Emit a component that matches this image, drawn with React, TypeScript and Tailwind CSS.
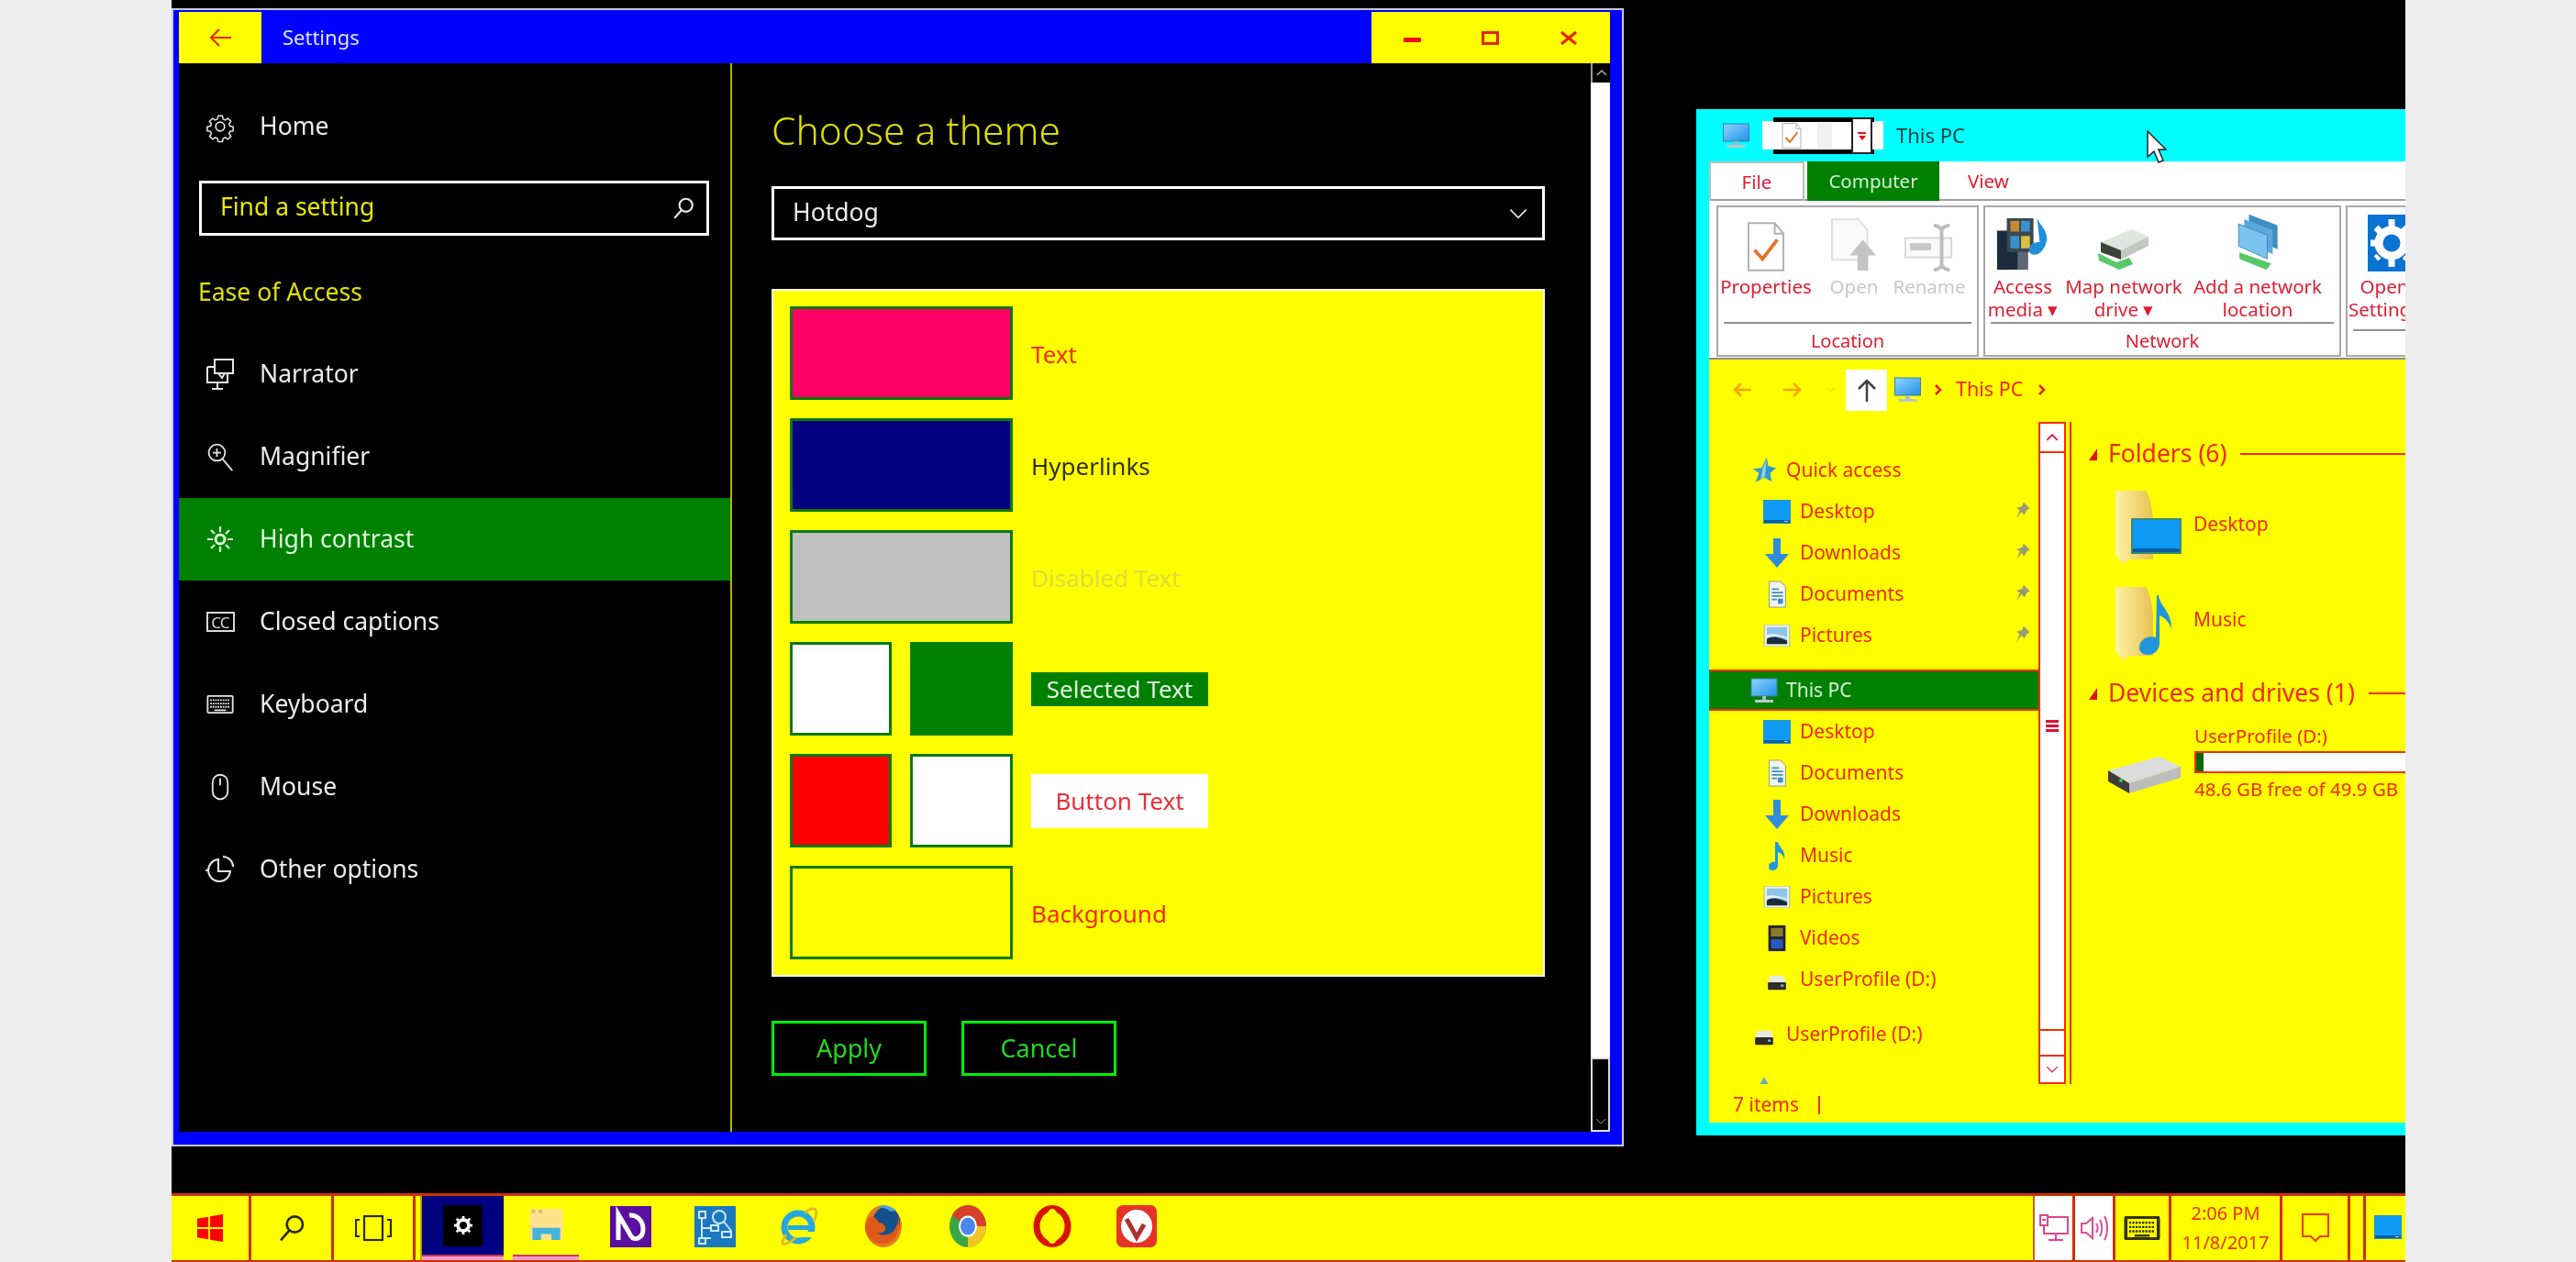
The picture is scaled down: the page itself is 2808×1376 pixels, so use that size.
import React from "react";

type P = { className?: string };

const GearOutline = ({ className }: P) => (
  <svg className={className} viewBox="0 0 24 24" fill="none" stroke="#e6e6e6" strokeWidth="1.3" strokeLinejoin="round">
    <path d="M10 2h4l.6 3 2 .9 2.6-1.6 2.7 2.8-1.7 2.5.8 2 3 .5v3.800l-3 .6-.8 2 1.700 2.500-2.700 2.700-2.500-1.600-2 .8-.7 3h-4l-.6-3-2-.8-2.500 1.600-2.800-2.700 1.700-2.500-.9-2-3-.6v-3.800l3-.5.900-2-1.700-2.500 2.800-2.800 2.500 1.600 2-.9z" transform="translate(1.500 1.500) scale(.88)" />
    <circle cx="12" cy="12" r="3.600" />
  </svg>
);
const SearchIco = ({ className, c = "#e6e6e6" }: P & { c?: string }) => (
  <svg className={className} viewBox="0 0 24 24" fill="none" stroke={c} strokeWidth="2">
    <circle cx="14.500" cy="9" r="6.500" />
    <path d="M10 14 3 22" />
  </svg>
);
const NarratorIco = ({ className }: P) => (
  <svg className={className} viewBox="0 0 32 36" fill="none" stroke="#e6e6e6" strokeWidth="2">
    <path d="M10 2h20v15H10zM2 10h8M2 10v17h22v-10M13 27v6M7 34h12M14 17l4 5 3-5" />
  </svg>
);
const MagIco = ({ className }: P) => (
  <svg className={className} viewBox="0 0 32 36" fill="none" stroke="#e6e6e6" strokeWidth="2">
    <circle cx="12" cy="13" r="10" />
    <path d="M12 8v10M7 13h10M19 21l12 14" />
  </svg>
);
const SunIco = ({ className }: P) => (
  <svg className={className} viewBox="0 0 30 30" fill="none" stroke="#d8ffd8" strokeWidth="2.200">
    <circle cx="15" cy="15" r="5" strokeWidth="3" />
    <path d="M15 1v6M15 23v6M1 15h6M23 15h6M5 5l4 4M21 21l4 4M25 5l-4 4M9 21l-4 4" />
  </svg>
);
const KeyboardIco = ({ className, c = "#e6e6e6", w = "2" }: P & { c?: string; w?: string }) => (
  <svg className={className} viewBox="0 0 32 22" fill="none" stroke={c} strokeWidth={w}>
    <rect x="1" y="1" width="30" height="20" rx="1" />
    <path d="M4 6h24M4 10h24M4 14h24" strokeDasharray="2 1" strokeWidth="2" />
    <path d="M9 18h14" strokeWidth="2" />
  </svg>
);
const MouseIco = ({ className }: P) => (
  <svg className={className} viewBox="0 0 24 32" fill="none" stroke="#e6e6e6" strokeWidth="2">
    <rect x="3" y="1.500" width="18" height="29" rx="9" />
    <path d="M12 6v8" />
  </svg>
);
const OtherIco = ({ className }: P) => (
  <svg className={className} viewBox="0 0 32 32" fill="none" stroke="#e6e6e6" strokeWidth="2">
    <path d="M14 5a12 12 0 1 0 13 13H14zM19 2a11 11 0 0 1 11 11M3 17H0" />
  </svg>
);
const ChevronDown = ({ className, c = "#e6e6e6" }: P & { c?: string }) => (
  <svg className={className} viewBox="0 0 24 14" fill="none" stroke={c} strokeWidth="2">
    <path d="M2 2l10 10L22 2" />
  </svg>
);
const ChevronUp = ({ className, c = "#e6e6e6" }: P & { c?: string }) => (
  <svg className={className} viewBox="0 0 24 14" fill="none" stroke={c} strokeWidth="3">
    <path d="M2 12L12 2l10 10" />
  </svg>
);
const CrumbChevron = () => (
  <svg className="w-[8px] h-[12px] shrink-0" viewBox="0 0 8 12" fill="none" stroke="#e82000" strokeWidth="2.500">
    <path d="M1 1l5 5-5 5" />
  </svg>
);

const PcIco = ({ className }: P) => (
  <svg className={className} viewBox="0 0 30 28">
    <defs>
      <linearGradient id="pcg" x1="0" y1="0" x2="1" y2="1">
        <stop offset="0" stopColor="#8fd6ff" />
        <stop offset="1" stopColor="#1e90e8" />
      </linearGradient>
    </defs>
    <rect x="1" y="1" width="28" height="19" fill="url(#pcg)" stroke="#3b7f9f" />
    <rect x="13" y="20" width="4" height="4" fill="#a8b8b8" />
    <rect x="5" y="24" width="20" height="3" fill="#b8c8c8" />
  </svg>
);
const DesktopIco = ({ className }: P) => (
  <svg className={className} viewBox="0 0 30 26">
    <rect x="0" y="0" width="30" height="26" fill="#0f9bf5" stroke="#3c8c8c" />
    <rect x="1" y="22" width="28" height="3" fill="#0a5ea0" />
    <rect x="23" y="23" width="4" height="1" fill="#cce" />
  </svg>
);
const DownIco = ({ className }: P) => (
  <svg className={className} viewBox="0 0 30 32">
    <path d="M11 0h8v17h9L15 32 2 17h9z" fill="#2f8ddc" />
  </svg>
);
const DocIco = ({ className }: P) => (
  <svg className={className} viewBox="0 0 30 32">
    <path d="M6 1h13l6 6v24H6z" fill="#f2f4ea" stroke="#8a9a80" />
    <path d="M9 10h8M9 14h13M9 18h13M9 22h6" stroke="#3d8ec8" strokeWidth="2" />
    <rect x="16" y="21" width="6" height="6" fill="#3d8ec8" />
  </svg>
);
const PicIco = ({ className }: P) => (
  <svg className={className} viewBox="0 0 30 26">
    <rect x="0" y="0" width="30" height="26" fill="#eef2dc" stroke="#a8b090" />
    <rect x="3" y="3" width="24" height="20" fill="#8cc4ec" />
    <path d="M3 17c6-4 12-3 24 2v4H3z" fill="#1c2c3c" />
    <path d="M3 12c8-2 14 0 24 3v2C18 13 10 13 3 16z" fill="#e8f0f4" />
  </svg>
);
const NoteIco = ({ className }: P) => (
  <svg className={className} viewBox="0 0 30 32">
    <path d="M13 1h3c1 6 9 9 7 19-1-5-4-7-7-8v14c0 4-3 6-6 6s-4-2-4-4c0-4 4-6 7-5z" fill="#1f96dc" />
  </svg>
);
const VideoIco = ({ className }: P) => (
  <svg className={className} viewBox="0 0 30 32">
    <rect x="5" y="1" width="20" height="30" fill="#23231a" />
    <rect x="8" y="4" width="14" height="10" fill="#8a7a30" />
    <rect x="8" y="17" width="14" height="11" fill="#2858c0" />
  </svg>
);
const DriveSmall = ({ className }: P) => (
  <svg className={className} viewBox="0 0 30 22">
    <path d="M6 2h18l3 9H3z" fill="#e8e8e0" />
    <rect x="3" y="11" width="24" height="10" rx="1" fill="#2c2c28" />
    <rect x="20" y="14" width="4" height="3" fill="#8ac" />
  </svg>
);
const StarIco = ({ className }: P) => (
  <svg className={className} viewBox="0 0 30 32">
    <path d="M18 1l2 10 9 2-7 6 2 10-9-5-10 6 4-11-7-5 10-1z" fill="#2f9bd0" />
    <path d="M18 3l-2 20-5 3 3-14z" fill="#9ad0d8" />
  </svg>
);
const PinIco = ({ className }: P) => (
  <svg className={className} viewBox="0 0 20 26">
    <path d="M11 1l8 8-4 2-3 6-4-4-6 9 4-11-4-3 7-2z" fill="#9a9a70" />
  </svg>
);
const NetIco = ({ className }: P) => (
  <svg className={className} viewBox="0 0 30 26">
    <path d="M15 1l10 16H5z" fill="#6aa8c8" />
    <rect x="4" y="18" width="22" height="6" fill="#4a88a8" />
  </svg>
);

const FolderDesktop = ({ className }: P) => (
  <svg className={className} viewBox="0 0 72 80">
    <defs>
      <linearGradient id="fld" x1="0" y1="0" x2="1" y2="0">
        <stop offset="0" stopColor="#fff2a8" />
        <stop offset="1" stopColor="#e6c050" />
      </linearGradient>
    </defs>
    <path d="M0 0h33c5 8 7 20 8 30v45H14L9 80 0 70z" fill="url(#fld)" />
    <rect x="18" y="31" width="53" height="37" fill="#0f9bf5" stroke="#3a8a70" strokeWidth="2" />
    <rect x="19" y="63" width="51" height="4" fill="#0a5ea0" />
  </svg>
);
const FolderMusic = ({ className }: P) => (
  <svg className={className} viewBox="0 0 72 80">
    <defs>
      <linearGradient id="fld2" x1="0" y1="0" x2="1" y2="0">
        <stop offset="0" stopColor="#fff2a8" />
        <stop offset="1" stopColor="#e6c050" />
      </linearGradient>
    </defs>
    <path d="M0 0h33c5 8 7 20 8 30v45H14L9 80 0 70z" fill="url(#fld2)" />
    <path d="M45 9h2c1 12 15 18 14 38-1-8-8-14-13-16v30c0 9-7 13-13 13-6 0-9-4-9-8 0-8 9-14 18-11z" fill="#1f96dc" />
  </svg>
);
const DriveLarge = ({ className }: P) => (
  <svg className={className} viewBox="0 0 82 42">
    <path d="M2 16L58 1l23 11-56 18z" fill="#dcdcdc" />
    <path d="M2 16l23 14v11L2 28z" fill="#3c3c3c" />
    <path d="M25 30l56-18v12L25 41z" fill="#bcbcbc" />
    <circle cx="16" cy="27" r="2" fill="#30d060" />
  </svg>
);

const PropsIco = ({ className }: P) => (
  <svg className={className} viewBox="0 0 42 56" fill="none">
    <path d="M1 1h30l10 12v42H1z" fill="#fff" stroke="#b0b0b0" strokeWidth="2" />
    <path d="M31 1v12h10" stroke="#b0b0b0" strokeWidth="2" />
    <path d="M8 32l9 10 17-22" stroke="#e8702a" strokeWidth="4" />
  </svg>
);
const OpenIco = ({ className }: P) => (
  <svg className={className} viewBox="0 0 52 60" fill="none">
    <path d="M1 1h30l10 12v34H1z" fill="#fafafa" stroke="#dedede" strokeWidth="2" />
    <path d="M36 24l15 18H42v17H30V42H21z" fill="#c4c4c4" />
  </svg>
);
const RenameIco = ({ className }: P) => (
  <svg className={className} viewBox="0 0 56 52" fill="none">
    <rect x="1" y="15" width="52" height="22" fill="#fafafa" stroke="#d8d8d8" strokeWidth="2" />
    <rect x="6" y="21" width="24" height="8" fill="#c8c8c8" />
    <path d="M33 1c3 0 7 2 9 5 2-3 6-5 9-5M42 6v40M33 51c3 0 7-2 9-5 2 3 6 5 9 5" stroke="#bcbcbc" strokeWidth="4" />
  </svg>
);
const MediaIco = ({ className }: P) => (
  <svg className={className} viewBox="0 0 60 62">
    <rect x="1" y="16" width="32" height="44" fill="#1c2c3c" />
    <rect x="24" y="16" width="12" height="44" fill="#5a6874" />
    <rect x="12" y="2" width="30" height="38" fill="#3c4850" />
    <rect x="16" y="5" width="10" height="12" fill="#c88a30" />
    <rect x="28" y="5" width="10" height="12" fill="#3a90d0" />
    <rect x="16" y="22" width="10" height="14" fill="#3a90d0" />
    <rect x="28" y="22" width="10" height="14" fill="#d8c040" />
    <path d="M46 1c2 8 12 14 11 25-1 7-5 15-12 17-6 1-9-3-8-7 1-5 7-8 12-7z" fill="#1f8fd8" />
  </svg>
);
const MapIco = ({ className }: P) => (
  <svg className={className} viewBox="0 0 58 48">
    <path d="M4 16L38 2l18 8-30 15z" fill="#e0e4e0" />
    <path d="M4 16l22 9v10L4 27z" fill="#3c4438" />
    <path d="M26 25l30-15v10L26 35z" fill="#c0c8c0" />
    <path d="M1 28l20 10 14-5 4 7-15 6L2 36z" fill="#58c868" />
  </svg>
);
const AddNetIco = ({ className }: P) => (
  <svg className={className} viewBox="0 0 54 74">
    <path d="M16 2l36 14v30L16 30z" fill="#3c8fc0" />
    <path d="M10 8l36 14v30L10 36z" fill="#5aa8dc" />
    <path d="M3 14l36 14v30L3 42z" fill="#7cc4f0" stroke="#3a7fa8" />
    <path d="M4 50l40 14-6 8L4 58z" fill="#58c868" />
  </svg>
);
const SettingsTile = ({ className }: P) => (
  <svg className={className} viewBox="0 0 50 62">
    <rect width="50" height="62" fill="#0a72d0" />
    <circle cx="26" cy="31" r="14" fill="none" stroke="#fff" strokeWidth="9" />
    <path d="M26 5v52M3 31h46M9 14l34 34M43 14L9 48" stroke="#fff" strokeWidth="7" strokeDasharray="8 36" />
  </svg>
);

const WinLogo = ({ className }: P) => (
  <svg className={className} viewBox="0 0 32 34">
    <path d="M1 6l13-2v12H1zM16 3.500L31 1v15H16zM1 18h13v12L1 28zM16 18h15v15l-15-2.500z" fill="#f00" />
  </svg>
);
const TaskViewIco = ({ className }: P) => (
  <svg className={className} viewBox="0 0 40 30" fill="none" stroke="#2a2a00" strokeWidth="2.200">
    <rect x="10" y="2" width="20" height="26" />
    <path d="M5 6H1v18h4M35 6h4v18h-4" />
  </svg>
);
const WhiteGear = ({ className }: P) => (
  <svg className={className} viewBox="0 0 24 24" fill="none">
    <circle cx="12" cy="12" r="6.500" stroke="#fff" strokeWidth="4" />
    <path d="M12 1v5M12 18v5M1 12h5M18 12h5M4 4l4 4M16 16l4 4M20 4l-4 4M8 16l-4 4" stroke="#fff" strokeWidth="3" />
  </svg>
);
const ExplorerIco = ({ className }: P) => (
  <svg className={className} viewBox="0 0 38 36">
    <rect width="38" height="36" fill="#ffe28c" />
    <rect x="2" y="1" width="4" height="4" fill="#d8c060" />
    <rect x="10" y="1" width="4" height="4" fill="#d8c060" />
    <path d="M3 22h32v14H25v-7H13v7H3z" fill="#45b4dc" />
  </svg>
);
const NApp = ({ className }: P) => (
  <svg className={className} viewBox="0 0 45 45">
    <rect width="45" height="45" fill="#5a0fa0" />
    <path d="M9 37V9l14 24c3 5 13 3 13-8 0-9-7-16-15-15" fill="none" stroke="#fff" strokeWidth="5" />
  </svg>
);
const GraphApp = ({ className }: P) => (
  <svg className={className} viewBox="0 0 45 45">
    <rect width="45" height="45" fill="#1a78c0" />
    <g fill="none" stroke="#cfe8f4" strokeWidth="2">
      <circle cx="27" cy="12" r="7" />
      <path d="M32 17l8 10" />
      <rect x="5" y="6" width="7" height="7" />
      <path d="M8 13v22M8 24h10M8 35h10" />
      <rect x="18" y="21" width="8" height="6" />
      <rect x="30" y="28" width="10" height="6" />
      <rect x="5" y="35" width="7" height="6" />
    </g>
  </svg>
);
const IeIco = ({ className }: P) => (
  <svg className={className} viewBox="0 0 44 46">
    <circle cx="21" cy="24" r="15" fill="none" stroke="#25a8e0" strokeWidth="7" />
    <rect x="10" y="22" width="24" height="5" fill="#25a8e0" />
    <path d="M8 32C0 44 4 46 18 36M28 8c12-8 16-4 10 10" fill="none" stroke="#e8b820" strokeWidth="3" />
    <rect x="24" y="29" width="20" height="6" fill="#ffff00" />
  </svg>
);
const FirefoxIco = ({ className }: P) => (
  <svg className={className} viewBox="0 0 42 48">
    <ellipse cx="21" cy="24" rx="20" ry="23" fill="#ea7a20" />
    <ellipse cx="24" cy="20" rx="15" ry="17" fill="#16508c" />
    <path d="M6 14c4-2 8 2 10 6 4 0 8 4 7 8-2 3-6 4-9 3 4 4 14 4 19-3 3-5 5-10 4-14 3 8 2 18-6 25-9 8-24 5-29-8-2-6-1-12 4-17z" fill="#e05a18" />
    <path d="M14 3c5-3 15-2 21 4l-6 1C24 4 18 3 14 3z" fill="#48a8d8" />
  </svg>
);
const ChromeIco = ({ className }: P) => (
  <svg className={className} viewBox="0 0 42 48">
    <ellipse cx="21" cy="24" rx="20" ry="23" fill="#3aa648" />
    <path d="M21 24l20 0A20 23 0 0 0 3.700 12.500z" fill="#d8402c" />
    <path d="M21 24l20 0A20 23 0 0 1 21 47z" fill="#f2c428" />
    <ellipse cx="21" cy="24" rx="10" ry="11.500" fill="#fff" />
    <ellipse cx="21" cy="24" rx="8" ry="9.500" fill="#4a88ee" />
  </svg>
);
const OperaIco = ({ className }: P) => (
  <svg className={className} viewBox="0 0 42 48">
    <ellipse cx="21" cy="24" rx="17" ry="19.500" fill="none" stroke="#d81400" strokeWidth="7" />
    <ellipse cx="21" cy="24" rx="8" ry="19" fill="#ffff00" />
  </svg>
);
const VivaldiIco = ({ className }: P) => (
  <svg className={className} viewBox="0 0 44 46">
    <rect width="44" height="46" rx="7" fill="#e63228" />
    <ellipse cx="22" cy="23" rx="17" ry="18" fill="#fff" />
    <path d="M11 15l11 20 8-14" fill="none" stroke="#b03030" strokeWidth="5" />
  </svg>
);
const NetTray = ({ className }: P) => (
  <svg className={className} viewBox="0 0 32 30" fill="none" stroke="#e0458c" strokeWidth="2">
    <path d="M9 3h22v18H5v-8M18 21v6M10 28h16" />
    <rect x="1" y="1" width="8" height="11" />
    <path d="M3 6h4" />
  </svg>
);
const VolTray = ({ className }: P) => (
  <svg className={className} viewBox="0 0 32 32" fill="none" stroke="#d8508c" strokeWidth="2">
    <path d="M2 11h5l7-6v22l-7-6H2zM18 11c2 3 2 7 0 10M22 7c3 5 3 13 0 18M27 3c4 7 4 19 0 26" />
  </svg>
);
const ActionTray = ({ className }: P) => (
  <svg className={className} viewBox="0 0 30 32" fill="none" stroke="#ee3a00" strokeWidth="2">
    <path d="M1 1h28v24H20l-5 5-5-5H1z" />
  </svg>
);
const Cursor = ({ className }: P) => (
  <svg className={className} viewBox="0 0 22 36">
    <path d="M1 1v28l7-6 5 12 5-2-5-12h8z" fill="#fff" stroke="#222" strokeWidth="1.500" />
  </svg>
);

const sideItems = [
  { t: "Narrator", i: <NarratorIco className="w-[32px] h-[36px]" /> },
  { t: "Magnifier", i: <MagIco className="w-[32px] h-[32px]" /> },
  { t: "High contrast", i: <SunIco className="w-[30px] h-[30px]" />, active: true },
  {
    t: "Closed captions",
    i: (
      <div className="w-[31px] h-[22px] border-2 border-[#d8d8d8] flex items-center justify-center text-[17px] leading-none text-[#d8d8d8] tracking-tighter">
        CC
      </div>
    ),
  },
  { t: "Keyboard", i: <KeyboardIco className="w-[30px] h-[20px]" /> },
  { t: "Mouse", i: <MouseIco className="w-[22px] h-[30px]" /> },
  { t: "Other options", i: <OtherIco className="w-[32px] h-[32px]" /> },
];

const SwatchBox = ({ c, w = "w-[243px]" }: { c: string; w?: string }) => (
  <div className={`${w} h-[102px] border-[3px] border-[#0a7a0a]`} style={{ backgroundColor: c }} />
);

const SettingsWindow = () => (
  <div className="absolute left-0 top-[9px] w-[1583px] h-[1241px] border-2 border-[#c9c9ff] bg-[#0000ff] pl-[6px] pr-[13px] pt-[2px] pb-[14px] flex flex-col">
    <div className="h-[56px] flex shrink-0">
      <div className="w-[90px] bg-[#ffff00] flex items-center justify-center">
        <svg className="w-[24px] h-[22px]" viewBox="0 0 24 22" fill="none" stroke="#ee2200" strokeWidth="2">
          <path d="M24 11H2M11 2l-9 9 9 9" />
        </svg>
      </div>
      <div className="ml-[23px] flex items-center text-[#e4e4ff] text-[22px] pb-[2px]">Settings</div>
      <div className="ml-auto w-[260px] bg-[#ffff00] flex relative">
        <div className="w-[86px] flex items-center justify-center pt-[4px] pl-[2px]">
          <div className="w-[19px] h-[5px] bg-[#f01000]" />
        </div>
        <div className="w-[86px] flex items-center justify-center">
          <div className="w-[19px] h-[15px] border-[3px] border-[#e02800]" />
        </div>
        <div className="w-[86px] flex items-center justify-center">
          <svg className="w-[18px] h-[15px]" viewBox="0 0 18 15" stroke="#e62000" strokeWidth="3">
            <path d="M1 1l16 13M17 1L1 14" />
          </svg>
        </div>
      </div>
    </div>
    <div className="flex-1 bg-black flex min-h-0">
      <div className="w-[603px] shrink-0 border-r-2 border-[#b4b400] flex flex-col">
        <div className="mt-[24px] h-[90px] flex items-center pl-[29px] text-[#ececec] text-[26.5px]">
          <GearOutline className="w-[32px] h-[36px] shrink-0" />
          <span className="ml-[27px]">Home</span>
        </div>
        <div className="mt-[14px] ml-[22px] w-[556px] h-[60px] border-[3px] border-white flex items-center pl-[20px] pr-[12px] text-[#e8e800] text-[26.5px]">
          <span className="pb-[2px]">Find a setting</span>
          <SearchIco className="ml-auto w-[26px] h-[26px]" />
        </div>
        <div className="mt-[43px] pl-[21px] h-[36px] leading-[36px] text-[#e0e000] text-[26.5px]">Ease of Access</div>
        <div className="mt-[27px] flex flex-col">
          {sideItems.map((s) => (
            <div
              key={s.t}
              className={`h-[90px] flex items-center pl-[29px] text-[26.5px] ${s.active ? "bg-[#008000] text-[#dcffdc]" : "text-[#ececec]"}`}
            >
              <div className="w-[32px] flex justify-center shrink-0">{s.i}</div>
              <span className="ml-[27px]">{s.t}</span>
            </div>
          ))}
        </div>
      </div>
      <div className="flex-1 pl-[43px] flex flex-col min-w-0">
        <div className="mt-[50px] h-[46px] leading-[46px] text-[#dede00] text-[42.5px] font-light">Choose a theme</div>
        <div className="mt-[38px] w-[843px] h-[59px] border-[3px] border-white flex items-center pl-[20px] pr-[14px] text-[#ececec] text-[26.5px]">
          <span className="pb-[2px]">Hotdog</span>
          <ChevronDown className="ml-auto w-[24px] h-[12px]" />
        </div>
        <div className="mt-[53px] w-[843px] h-[750px] bg-[#ffff00] border-2 border-[#f4f4f4] pl-[18px] pt-[17px] flex flex-col gap-[20px] text-[26px]">
          <div className="flex items-center gap-[20px]">
            <SwatchBox c="#ff0066" />
            <span className="text-[#f03000] pt-[2px]">Text</span>
          </div>
          <div className="flex items-center gap-[20px]">
            <SwatchBox c="#000080" />
            <span className="text-[#303000] pt-[2px]">Hyperlinks</span>
          </div>
          <div className="flex items-center gap-[20px]">
            <SwatchBox c="#c0c0c0" />
            <span className="text-[#dcdc3c] pt-[2px]">Disabled Text</span>
          </div>
          <div className="flex items-center gap-[20px]">
            <div className="flex gap-[20px]">
              <SwatchBox c="#ffffff" w="w-[111px]" />
              <div className="w-[112px] h-[102px] bg-[#008000]" />
            </div>
            <span className="w-[193px] h-[37px] bg-[#008000] text-[#e0f4e0] flex items-center justify-center">Selected Text</span>
          </div>
          <div className="flex items-center gap-[20px]">
            <div className="flex gap-[20px]">
              <SwatchBox c="#ff0000" w="w-[111px]" />
              <SwatchBox c="#ffffff" w="w-[112px]" />
            </div>
            <span className="w-[193px] h-[59px] bg-white text-[#e8303c] flex items-center justify-center">Button Text</span>
          </div>
          <div className="flex items-center gap-[20px]">
            <SwatchBox c="#ffff00" />
            <span className="text-[#f52a00] pt-[2px]">Background</span>
          </div>
        </div>
        <div className="mt-[48px] flex gap-[38px] text-[27px] text-[#22d822]">
          <div className="w-[169px] h-[60px] border-[3px] border-[#00ee00] flex items-center justify-center">Apply</div>
          <div className="w-[169px] h-[60px] border-[3px] border-[#00ee00] flex items-center justify-center">Cancel</div>
        </div>
      </div>
      <div className="w-[21px] shrink-0 bg-white flex flex-col justify-between">
        <div className="h-[21px] bg-black border-l-2 border-[#999] flex items-center justify-center">
          <ChevronUp className="w-[12px] h-[7px]" c="#a8a8a8" />
        </div>
        <div className="h-[81px] bg-black border-2 border-[#ddd] flex items-end justify-center pb-[6px]">
          <ChevronDown className="w-[12px] h-[7px]" c="#888" />
        </div>
      </div>
    </div>
  </div>
);

const navItems: { t: string; i: React.ReactNode; lvl: 0 | 1; pin?: boolean; sel?: boolean; mt?: string }[] = [
  { t: "Quick access", i: <StarIco className="w-[28px] h-[30px]" />, lvl: 0 },
  { t: "Desktop", i: <DesktopIco className="w-[30px] h-[26px]" />, lvl: 1, pin: true },
  { t: "Downloads", i: <DownIco className="w-[30px] h-[32px]" />, lvl: 1, pin: true },
  { t: "Documents", i: <DocIco className="w-[30px] h-[30px]" />, lvl: 1, pin: true },
  { t: "Pictures", i: <PicIco className="w-[30px] h-[24px]" />, lvl: 1, pin: true },
  { t: "This PC", i: <PcIco className="w-[30px] h-[28px]" />, lvl: 0, sel: true, mt: "mt-[15px]" },
  { t: "Desktop", i: <DesktopIco className="w-[30px] h-[26px]" />, lvl: 1 },
  { t: "Documents", i: <DocIco className="w-[30px] h-[30px]" />, lvl: 1 },
  { t: "Downloads", i: <DownIco className="w-[30px] h-[32px]" />, lvl: 1 },
  { t: "Music", i: <NoteIco className="w-[30px] h-[32px]" />, lvl: 1 },
  { t: "Pictures", i: <PicIco className="w-[30px] h-[24px]" />, lvl: 1 },
  { t: "Videos", i: <VideoIco className="w-[30px] h-[30px]" />, lvl: 1 },
  { t: "UserProfile (D:)", i: <DriveSmall className="w-[28px] h-[18px] mt-[6px]" />, lvl: 1 },
  { t: "UserProfile (D:)", i: <DriveSmall className="w-[28px] h-[18px] mt-[6px]" />, lvl: 0, mt: "mt-[15px]" },
  { t: "Network", i: <NetIco className="w-[26px] h-[24px] mb-[12px]" />, lvl: 0, mt: "mt-[18px]" },
];

const RibItem = ({ w, icon, lines, off }: { w: string; icon: React.ReactNode; lines: string[]; off?: boolean }) => (
  <div className={`${w} shrink-0 flex flex-col items-center`}>
    <div className="h-[64px] w-full flex items-end justify-center">{icon}</div>
    <div className={`mt-[4px] text-[20.5px] leading-[25px] text-center whitespace-nowrap ${off ? "text-[#c8c8c8]" : "text-[#e01c30]"}`}>
      {lines.map((l) => (
        <div key={l}>{l}</div>
      ))}
    </div>
  </div>
);

const RibGroup = ({ w, label, children }: { w: string; label?: string; children: React.ReactNode }) => (
  <div className={`${w} shrink-0 h-[165px] border-2 border-[#a8a8a8] flex flex-col`}>
    <div className="h-[133px] flex pt-[6px]">{children}</div>
    <div className="mx-[6px] h-[2px] bg-[#909090]" />
    <div className="flex-1 flex items-center justify-center text-[20px] text-[#e01c30] pt-[4px]">{label}</div>
  </div>
);

const TriDown = () => <div className="w-0 h-0 border-l-[4px] border-r-[4px] border-t-[5px] border-l-transparent border-r-transparent border-t-[#e01020]" />;

const SectionHead = ({ t }: { t: string }) => (
  <div className="h-[36px] flex items-center pl-[21px] text-[26.5px] text-[#f02a00] whitespace-nowrap">
    <svg className="w-[9px] h-[13px] shrink-0" viewBox="0 0 9 13">
      <path d="M9 0v13H0z" fill="#e01020" />
    </svg>
    <span className="ml-[12px]">{t}</span>
    <div className="ml-[15px] w-[400px] h-[2px] bg-[#f03000] shrink-0" />
  </div>
);

const ExplorerWindow = () => (
  <div className="absolute left-[1662px] top-[119px] w-[1000px] h-[1119px] bg-[#00ffff] pl-[14px] pb-[14px] flex flex-col">
    <div className="h-[57px] flex items-center shrink-0 text-[#123c3c] text-[22px]">
      <PcIco className="ml-[14px] w-[31px] h-[28px]" />
      <div className="ml-[13px] w-[132px] h-[31px] bg-white relative flex items-center">
        <div className="absolute left-[12px] right-[10px] -top-[4px] h-[5px] bg-black" />
        <div className="absolute left-[12px] right-[10px] -bottom-[5px] h-[5px] bg-black" />
        <PropsIco className="ml-[21px] w-[22px] h-[28px]" />
        <div className="ml-[17px] w-[16px] h-[28px] bg-[#f0f0f0]" />
        <div className="absolute right-[12px] -top-[4px] w-[23px] h-[40px] border-2 border-[#222] bg-white rounded-[2px] flex flex-col items-center justify-center gap-[2px]">
          <div className="w-[9px] h-[2px] bg-[#e01020]" />
          <TriDown />
        </div>
      </div>
      <span className="ml-[14px]">This PC</span>
    </div>
    <div className="h-[43px] bg-white border-b-2 border-[#a0a0a0] flex shrink-0 text-[20.5px] text-[#e01c30]">
      <div className="w-[104px] h-[43px] border-t-2 border-l-2 border-r-2 border-[#bcbcbc] flex items-center justify-center">File</div>
      <div className="ml-[3px] w-[144px] h-[43px] bg-[#008000] text-[#d4f0d4] flex items-center justify-center">Computer</div>
      <div className="ml-[31px] flex items-center pt-[2px]">View</div>
    </div>
    <div className="h-[173px] bg-white border-b-2 border-[#8c8c8c] shrink-0 flex gap-[5px] pl-[8px] pt-[5px]">
      <RibGroup w="w-[286px]" label="Location">
        <RibItem w="w-[104px]" icon={<PropsIco className="w-[40px] h-[54px]" />} lines={["Properties"]} />
        <RibItem w="w-[88px]" icon={<OpenIco className="w-[50px] h-[58px]" />} lines={["Open"]} off />
        <RibItem w="w-[76px]" icon={<RenameIco className="w-[54px] h-[52px]" />} lines={["Rename"]} off />
      </RibGroup>
      <RibGroup w="w-[390px]" label="Network">
        <RibItem w="w-[82px]" icon={<MediaIco className="w-[60px] h-[60px]" />} lines={["Access", "media ▾"]} />
        <RibItem w="w-[138px]" icon={<MapIco className="w-[58px] h-[48px]" />} lines={["Map network", "drive ▾"]} />
        <RibItem w="w-[154px]" icon={<AddNetIco className="w-[52px] h-[64px]" />} lines={["Add a network", "location"]} />
      </RibGroup>
      <RibGroup w="w-[120px]">
        <RibItem w="w-[80px]" icon={<SettingsTile className="w-[50px] h-[62px] ml-[14px]" />} lines={["Open", "Settings"]} />
      </RibGroup>
    </div>
    <div className="h-[66px] bg-[#ffff00] flex items-center shrink-0 text-[21.5px] text-[#f02a00]">
      <svg className="ml-[26px] w-[20px] h-[18px]" viewBox="0 0 20 18" fill="none" stroke="#ffa000" strokeWidth="2.500">
        <path d="M20 9H2M9 2L2 9l7 7" />
      </svg>
      <svg className="ml-[35px] w-[20px] h-[18px]" viewBox="0 0 20 18" fill="none" stroke="#ffa000" strokeWidth="2.500">
        <path d="M0 9h18M11 2l7 7-7 7" />
      </svg>
      <ChevronDown className="ml-[27px] w-[9px] h-[6px]" c="#e8a000" />
      <div className="ml-[12px] w-[45px] h-[45px] bg-white flex items-center justify-center">
        <svg className="w-[22px] h-[26px]" viewBox="0 0 22 26" fill="none" stroke="#404040" strokeWidth="2.500">
          <path d="M11 26V3M2 12l9-9 9 9" />
        </svg>
      </div>
      <PcIco className="ml-[7px] w-[31px] h-[28px]" />
      <div className="ml-[14px]"><CrumbChevron /></div>
      <span className="ml-[15px] pb-[2px]">This PC</span>
      <div className="ml-[17px]"><CrumbChevron /></div>
    </div>
    <div className="h-[724px] bg-[#ffff00] flex shrink-0 min-h-0 text-[21px] text-[#f02a00]">
      <div className="w-[359px] shrink-0 h-[724px] overflow-hidden pt-[32px]">
        {navItems.map((n, idx) => (
          <div
            key={idx}
            className={`${n.mt ?? ""} ${n.sel ? "h-[45px] bg-[#008000] border-y-2 border-[#f03000] text-[#d8f0d8]" : "h-[45px]"} flex items-center ${n.lvl === 0 ? "pl-[45px] gap-[9px]" : "pl-[59px] gap-[10px]"}`}
          >
            <div className="w-[30px] flex justify-center shrink-0">{n.i}</div>
            <span className="whitespace-nowrap">{n.t}</span>
            {n.pin && <PinIco className="ml-auto mr-[8px] w-[18px] h-[22px]" />}
          </div>
        ))}
      </div>
      <div className="w-[30px] mt-[2px] shrink-0 h-[722px] border-2 border-[#f03000] bg-white flex flex-col">
        <div className="h-[32px] border-b-2 border-[#f03000] flex items-center justify-center">
          <ChevronUp className="w-[14px] h-[8px]" c="#e01040" />
        </div>
        <div className="flex-1 flex flex-col items-center justify-center gap-[2px] pb-[34px]">
          <div className="w-[14px] h-[3px] bg-[#e01030]" />
          <div className="w-[14px] h-[3px] bg-[#e01030]" />
          <div className="w-[14px] h-[3px] bg-[#e01030]" />
        </div>
        <div className="h-[28px] border-t-2 border-[#f03000]" />
        <div className="h-[30px] border-t-2 border-[#f03000] flex items-center justify-center">
          <ChevronDown className="w-[14px] h-[8px]" c="#e01040" />
        </div>
      </div>
      <div className="ml-[4px] mt-[2px] w-[2px] h-[722px] bg-[#f03000] shrink-0" />
      <div className="flex-1 min-w-0 pt-[19px] -ml-[2px]">
        <SectionHead t="Folders (6)" />
        <div className="h-[105px] mt-[9px] flex items-center pl-[50px]">
          <FolderDesktop className="w-[72px] h-[80px] shrink-0" />
          <span className="ml-[13px] pb-[6px]">Desktop</span>
        </div>
        <div className="h-[105px] flex items-center pl-[50px]">
          <FolderMusic className="w-[72px] h-[80px] shrink-0" />
          <span className="ml-[13px] pb-[8px]">Music</span>
        </div>
        <div className="mt-[6px]">
          <SectionHead t="Devices and drives (1)" />
        </div>
        <div className="mt-[14px] flex pl-[40px]">
          <DriveLarge className="mt-[36px] w-[82px] h-[42px] shrink-0" />
          <div className="ml-[14px] flex flex-col text-[20.5px]">
            <span className="leading-[28px]">UserProfile (D:)</span>
            <div className="mt-[3px] w-[260px] h-[24px] border-2 border-[#f03000] bg-white">
              <div className="w-[8px] h-full bg-[#0a6a0a]" />
            </div>
            <span className="mt-[3px] leading-[28px] whitespace-nowrap">48.6 GB free of 49.9 GB</span>
          </div>
        </div>
      </div>
    </div>
    <div className="flex-1 bg-[#ffff00] flex items-center pl-[26px] pt-[3px] text-[21px] text-[#f02a00]">
      <span>7 items</span>
      <div className="ml-[21px] w-[2px] h-[20px] bg-[#f03000]" />
    </div>
  </div>
);

const Cell = ({ w, bg = "bg-[#ffff00]", children }: { w: string; bg?: string; children?: React.ReactNode }) => (
  <div className={`${w} ${bg} h-full shrink-0 border-r-[3px] border-[#cc3000] flex items-center justify-center`}>{children}</div>
);

const Pinned = ({ children }: { children: React.ReactNode }) => (
  <div className="w-[92px] h-full shrink-0 flex items-center justify-center pb-[4px]">{children}</div>
);

const Taskbar = () => (
  <div className="h-[75px] shrink-0 bg-[#ffff00] border-t-[3px] border-b-2 border-[#cc3000] flex">
    <Cell w="w-[87px]">
      <WinLogo className="w-[30px] h-[32px]" />
    </Cell>
    <Cell w="w-[90px]">
      <SearchIco className="w-[32px] h-[36px]" c="#2a2a00" />
    </Cell>
    <Cell w="w-[89px]">
      <TaskViewIco className="w-[40px] h-[30px]" />
    </Cell>
    <div className="w-[7px] h-full border-r-2 border-[#b8a000] shrink-0" />
    <div className="w-[89px] h-full shrink-0 flex flex-col">
      <div className="h-[64px] bg-[#000080] flex items-center justify-center">
        <div className="w-[43px] h-[45px] bg-black flex items-center justify-center">
          <WhiteGear className="w-[22px] h-[24px]" />
        </div>
      </div>
      <div className="h-[6px] border-t-2 border-[#c8385c] bg-[#ff99cc]" />
    </div>
    <div className="w-[92px] h-full shrink-0 flex flex-col items-center relative">
      <div className="flex-1 flex items-center justify-center pb-[2px]">
        <ExplorerIco className="w-[37px] h-[34px]" />
      </div>
      <div className="w-[72px] h-[6px] border-t-2 border-[#c8385c] bg-[#ff99cc]" />
    </div>
    <Pinned><NApp className="w-[45px] h-[45px]" /></Pinned>
    <Pinned><GraphApp className="w-[45px] h-[45px]" /></Pinned>
    <Pinned><IeIco className="w-[44px] h-[46px]" /></Pinned>
    <Pinned><FirefoxIco className="w-[42px] h-[48px]" /></Pinned>
    <Pinned><ChromeIco className="w-[42px] h-[48px]" /></Pinned>
    <Pinned><OperaIco className="w-[42px] h-[48px]" /></Pinned>
    <Pinned><VivaldiIco className="w-[44px] h-[46px]" /></Pinned>
    <div className="ml-auto flex h-full">
      <div className="w-[2px] h-full bg-[#cc6030]" />
      <Cell w="w-[44px]" bg="bg-white"><NetTray className="w-[32px] h-[30px]" /></Cell>
      <Cell w="w-[44px]" bg="bg-white"><VolTray className="w-[32px] h-[32px]" /></Cell>
      <Cell w="w-[61px]"><KeyboardIco className="w-[44px] h-[26px]" c="#333300" w="3" /></Cell>
      <Cell w="w-[121px]">
        <div className="flex flex-col items-center text-[20px] leading-[32px] text-[#f03000]">
          <span>2:06 PM</span>
          <span>11/8/2017</span>
        </div>
      </Cell>
      <Cell w="w-[74px]"><ActionTray className="w-[30px] h-[32px]" /></Cell>
      <div className="w-[17px] h-full border-r-[3px] border-[#cc3000] shrink-0" />
      <div className="w-[43px] h-full shrink-0 flex items-center pl-[9px] pb-[3px]">
        <DesktopIco className="w-[30px] h-[26px]" />
      </div>
    </div>
  </div>
);

export default function App() {
  return (
    <div
      className="w-[2808px] h-[1376px] bg-[#ececec] pl-[187px] pr-[186px] overflow-hidden blur-[0.7px]"
      style={{ fontFamily: '"Noto Sans", "Open Sans", sans-serif' }}
    >
      <div className="w-full h-full bg-black flex flex-col overflow-hidden">
        <div className="flex-1 relative min-h-0 overflow-hidden">
          <SettingsWindow />
          <ExplorerWindow />
          <Cursor className="absolute left-[2153px] top-[142px] w-[22px] h-[36px]" />
        </div>
        <Taskbar />
      </div>
    </div>
  );
}
